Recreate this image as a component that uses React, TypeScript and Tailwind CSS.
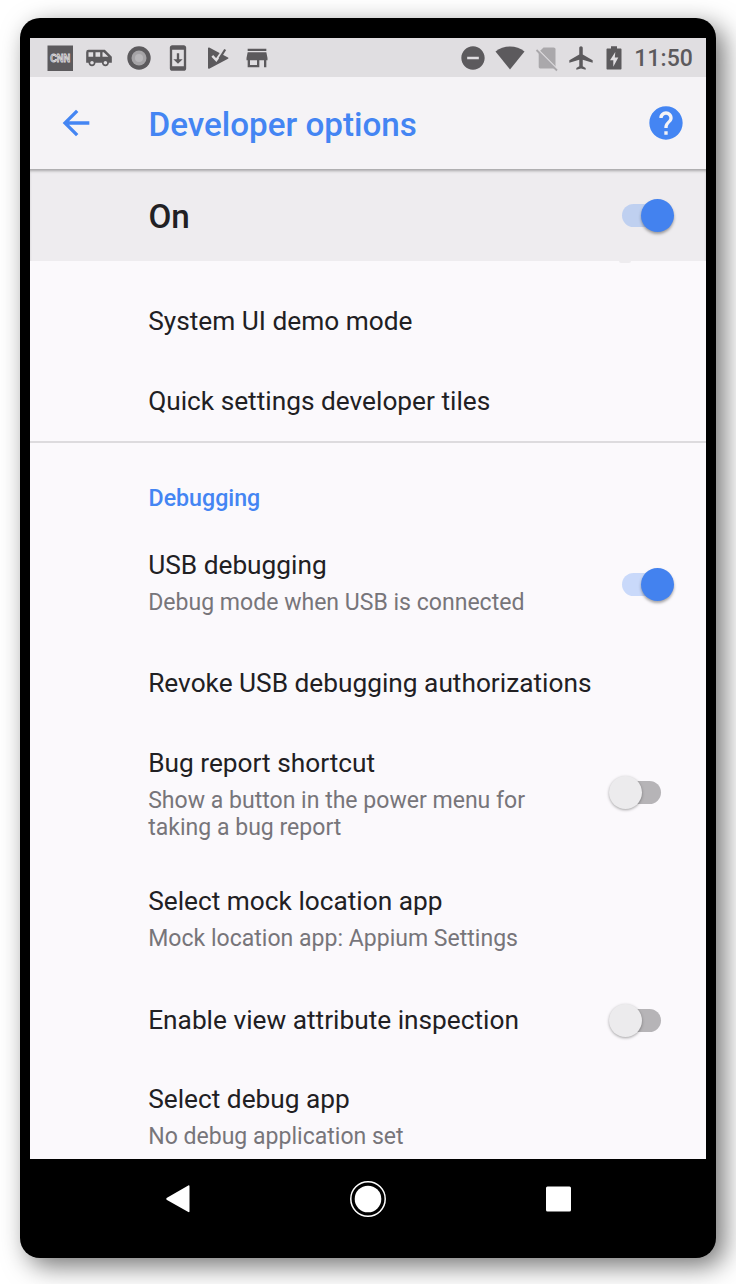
import React from 'react';
import {
  MdAirportShuttle,
  MdSystemUpdate,
  MdStore,
  MdDoNotDisturbOn,
  MdAirplanemodeActive,
  MdArrowBack,
  MdHelp,
} from 'react-icons/md';

function Switch({ on }: { on: boolean }) {
  return on ? (
    <span className="relative block h-[33px] w-[52px] shrink-0">
      <span className="absolute top-[5px] left-0 h-[23px] w-[44px] rounded-full bg-[#4285f4]/27" />
      <span className="absolute top-0 right-0 size-[33px] rounded-full bg-[#4382ef] shadow-[0_2px_3px_rgba(0,0,0,0.35)]" />
    </span>
  ) : (
    <span className="relative mr-[13px] block h-[33px] w-[52px] shrink-0">
      <span className="absolute top-[5px] right-0 h-[23px] w-[44px] rounded-full bg-[#b6b4b7]" />
      <span className="absolute top-0 left-0 size-[33px] rounded-full bg-[#ecebed] shadow-[0_1px_3px_rgba(0,0,0,0.35)]" />
    </span>
  );
}

type RowProps = { title: string; lines?: string[]; on?: boolean; size: string };

function Row({ title, lines = [], on, size }: RowProps) {
  const twoPart = lines.length > 0;
  return (
    <div className={`flex shrink-0 items-center justify-between pr-8 pl-[118.2px] ${size}`}>
      <div className={`flex flex-col gap-2 ${twoPart ? 'self-start pt-[25px]' : ''}`}>
        <div className="text-[26.25px] leading-[31px] whitespace-nowrap text-[#212023]">{title}</div>
        {twoPart && (
          <div className="text-[23.05px] leading-[27px] whitespace-nowrap text-[#77757a]">
            {lines.map((line) => (
              <div key={line}>{line}</div>
            ))}
          </div>
        )}
      </div>
      {on !== undefined && <Switch on={on} />}
    </div>
  );
}

function StatusBar() {
  return (
    <div className="flex h-[39px] shrink-0 items-center justify-between bg-[#e0dee1] pr-[13px] pl-[15.5px] text-[28px] text-[#5c5a5d]">
      <div className="flex items-center gap-[11.5px]">
        <svg viewBox="0 0 28 28" className="size-7">
          <path d="M1.5 1.500h25.500v25.500H1.500z" fill="currentColor" />
          <text x="14.2" y="18.2" textAnchor="middle" textLength="20" lengthAdjust="spacingAndGlyphs" fontFamily="Liberation Sans" fontWeight="700" fontSize="11" fill="#77757a" stroke="#dddbde" strokeWidth="0.9">CNN</text>
        </svg>
        <MdAirportShuttle />
        <svg viewBox="0 0 28 28" className="size-7">
          <circle cx="14" cy="14" r="11.7" fill="currentColor" />
          <circle cx="14" cy="14" r="7.5" fill="#a5a3a6" />
          <circle cx="14" cy="14" r="4" fill="#b8b6b9" />
        </svg>
        <MdSystemUpdate />
        <svg viewBox="0 0 28 28" className="size-7">
          <path d="M4 4.200c0-.7.600-1 1.200-.7L24 13.600c.6.300.6.900 0 1.200L5.200 24.700c-.6.300-1.200 0-1.200-.7z" fill="currentColor" />
          <path d="M8.300 11.800l4 4.200L19 6.500" fill="none" stroke="#e0dee1" strokeWidth="2.400" />
          <path d="M15.500 14.500l5.700-9" fill="none" stroke="currentColor" strokeWidth="2.200" />
        </svg>
        <MdStore />
      </div>
      <div className="flex items-center">
        <MdDoNotDisturbOn />
        <svg viewBox="0 0 30 28" className="ml-2 h-7 w-[30px]">
          <path d="M15 25.500L.5 7.500C4.700 4.300 9.500 2.500 15 2.500S25.300 4.300 29.500 7.500z" fill="currentColor" />
        </svg>
        <svg viewBox="0 0 28 28" className="ml-[7px] size-7 text-[#aaa8ab]">
          <path d="M11.500 3.500h10.200c1 0 1.800.8 1.800 1.800v17.400c0 1-.8 1.800-1.800 1.800H8.500c-1 0-1.800-.8-1.800-1.800V8.300z" fill="currentColor" />
          <path d="M5.500 5l20 20.300" stroke="#e0dee1" strokeWidth="1.400" />
          <path d="M4.500 6l20.500 20.500" stroke="currentColor" strokeWidth="1.800" />
        </svg>
        <MdAirplanemodeActive className="ml-[7px]" />
        <svg viewBox="0 0 16 28" className="ml-[11px] h-7 w-4">
          <path d="M5 2.200h6v2.300h3.500c.6 0 1 .4 1 1v19c0 .6-.4 1-1 1h-13c-.6 0-1-.4-1-1v-19c0-.6.4-1 1-1H5z" fill="currentColor" />
          <path d="M9.300 7.900L4 16.200h3.300v6.500L12.300 13.400H8.800z" fill="#e0dee1" />
        </svg>
        <span className="ml-3 text-[23px] leading-7 font-medium">
          <span className="block translate-y-px tracking-[0.1px]">11:50</span>
        </span>
      </div>
    </div>
  );
}

function NavBar() {
  return (
    <div className="flex h-[79px] shrink-0 items-center justify-between px-[134px] text-white">
      <svg viewBox="0 0 28 40" className="h-10 w-7" fill="currentColor">
        <path d="M24.300 6.500c.8-.4 1.200 0 1.200.8v25c0 .8-.5 1.200-1.200.8L3 21c-1-.7-1-1.600 0-2.300z" />
      </svg>
      <svg viewBox="0 0 40 40" className="size-10">
        <circle cx="20" cy="20" r="17.200" fill="none" stroke="currentColor" strokeWidth="1.500" />
        <circle cx="20" cy="20" r="13.300" fill="currentColor" />
      </svg>
      <svg viewBox="0 0 28 40" className="h-10 w-7" fill="currentColor">
        <rect x="2" y="7.500" width="25" height="25" rx="1.500" />
      </svg>
    </div>
  );
}

export default function App() {
  return (
    <div className="h-[1284px] w-[736px] overflow-hidden bg-white pt-[18px] pl-5 font-['Roboto',sans-serif]">
      <div className="flex h-[1240px] w-[696px] flex-col rounded-[20px] bg-black px-[10px] pt-5 shadow-[8px_8px_26px_rgba(0,0,0,0.55)]">
        <div className="flex h-[1121px] shrink-0 flex-col overflow-hidden bg-[#fbf9fc]">
          <StatusBar />
          <div className="flex h-[92px] shrink-0 items-center bg-[#f5f3f6] pr-5 pl-[26px] text-[#4485f3]">
            <MdArrowBack className="size-10" />
            <h1 className="ml-[52.500px] flex-1 pt-1 text-[33.200px] leading-10 font-medium">Developer options</h1>
            <MdHelp className="size-10" />
          </div>
          <div className="flex h-[92px] shrink-0 items-center justify-between bg-[#eeecef] pr-8 pl-[118.500px] shadow-[inset_0_3px_3px_-1px_rgba(0,0,0,0.3)]">
            <span className="pt-1 text-[33.200px] leading-10 font-medium text-[#212023]">On</span>
            <Switch on />
          </div>
          <div className="relative flex flex-col pt-[21px]">
            <span className="absolute top-0 left-[589px] h-[2px] w-3 rounded-b-full bg-[#eeecef]" />
            <Row title="System UI demo mode" size="h-[79px]" />
            <Row title="Quick settings developer tiles" size="h-[80px]" />
            <div className="h-[2px] shrink-0 bg-[#dddbde]" />
            <h2 className="h-[82px] pt-[42px] pl-[118.500px] text-[23.200px] leading-[27px] font-medium text-[#4485f3]">Debugging</h2>
            <Row title="USB debugging" lines={['Debug mode when USB is connected']} on size="h-[119px]" />
            <Row title="Revoke USB debugging authorizations" size="h-[79px]" />
            <Row title="Bug report shortcut" lines={['Show a button in the power menu for', 'taking a bug report']} on={false} size="h-[138px]" />
            <Row title="Select mock location app" lines={['Mock location app: Appium Settings']} size="h-[120px]" />
            <Row title="Enable view attribute inspection" on={false} size="h-[78px]" />
            <Row title="Select debug app" lines={['No debug application set']} size="h-[119px]" />
          </div>
        </div>
        <NavBar />
      </div>
    </div>
  );
}
